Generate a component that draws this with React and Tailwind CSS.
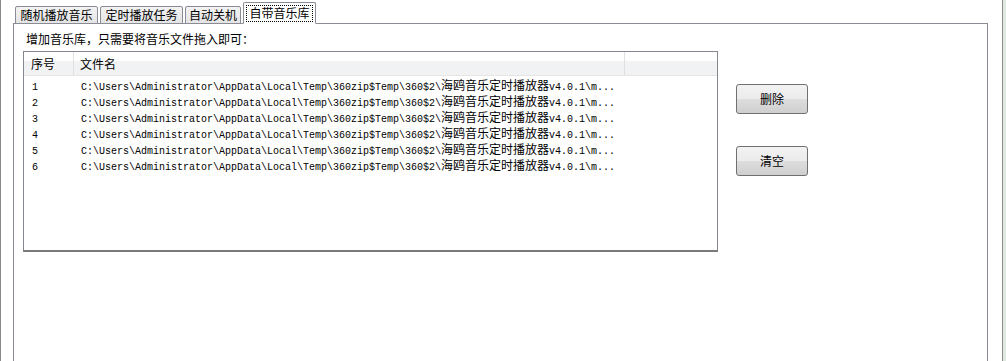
import React from 'react'

const font = { fontFamily: '"Noto Sans CJK SC", "Liberation Sans", sans-serif' }

const tabs = [
  { label: '随机播放音乐', w: 'w-[83px]' },
  { label: '定时播放任务', w: 'w-[83px]' },
  { label: '自动关机', w: 'w-[56px]' },
]

const path = 'C:\\Users\\Administrator\\AppData\\Local\\Temp\\360zip$Temp\\360$2\\'

function Row({ n }) {
  return (
    <div className="h-4 flex items-baseline text-black font-['Liberation_Mono',monospace] text-[10px] leading-4 overflow-hidden">
      <div className="w-[57px] pl-[8px]">{n}</div>
      <div className="whitespace-pre">
        {path}
        <span className="font-['Noto_Sans_CJK_SC',sans-serif] text-[12px] leading-4">海鸥音乐定时播放器</span>
        {'v4.0.1\\m...'}
      </div>
    </div>
  )
}

function Button({ children }) {
  return (
    <button className="w-[72px] h-[30px] rounded-[3px] border border-[#707070] bg-[linear-gradient(#f2f2f2_0%,#ebebeb_50%,#dddddd_51%,#cfcfcf_100%)] text-[12px] text-black flex items-center justify-center">
      {children}
    </button>
  )
}

export default function App() {
  return (
    <div className="w-[1006px] h-[361px] bg-white flex overflow-hidden text-[12px]" style={font}>
      <div className="w-[13px] shrink-0 border-l border-[#8a8a8a]" />

      <div className="w-[975px] shrink-0 flex flex-col">
        {/* tab strip */}
        <div className="h-[23px] flex items-end pl-[2px] gap-[2px] relative z-10">
          {tabs.map((t) => (
            <div
              key={t.label}
              className={`${t.w} h-[18px] -mb-px border border-[#898c95] rounded-t-[2px] bg-[linear-gradient(#f3f3f3,#e4e4e4)] flex items-center justify-center leading-none text-black`}
            >
              {t.label}
            </div>
          ))}
          <div className="w-[73px] h-[22px] -mb-px border border-[#898c95] border-b-white rounded-t-[2px] bg-white flex items-center justify-center">
            <span className="border border-dotted border-black px-[2px] h-[17px] flex items-center leading-none">自带音乐库</span>
          </div>
        </div>

        {/* panel */}
        <div className="flex-1 border border-b-0 border-[#898c95] pl-[9px] flex flex-col">
          <div className="mt-[7px] ml-[3px] h-4 leading-4 text-black">增加音乐库，只需要将音乐文件拖入即可：</div>

          <div className="mt-[4px] flex gap-[18px]">
            <div className="w-[695px] h-[201px] border border-[#828790] border-b-2 border-b-[#7a7a7a] flex flex-col">
              <div className="h-[24px] flex bg-[linear-gradient(#ffffff_0%,#ffffff_40%,#f1f2f4_41%,#f1f2f4_100%)] border-b border-[#e5e5e5]">
                <div className="w-[50px] pl-[7px] flex items-center border-r border-[#e0e0e0]">序号</div>
                <div className="w-[551px] pl-[6px] flex items-center border-r border-[#e0e0e0]">文件名</div>
                <div className="flex-1" />
              </div>
              <div className="pt-[1px]">
                {[1, 2, 3, 4, 5, 6].map((n) => (
                  <Row key={n} n={n} />
                ))}
              </div>
            </div>

            <div className="flex flex-col pt-[33px] gap-[32px]">
              <Button>删除</Button>
              <Button>清空</Button>
            </div>
          </div>
        </div>
      </div>

      <div className="w-[14px] shrink-0" />
      <div className="w-px shrink-0 bg-[#8a8a8a]" />
      <div className="flex-1 bg-[#dfe9df]" />
    </div>
  )
}
